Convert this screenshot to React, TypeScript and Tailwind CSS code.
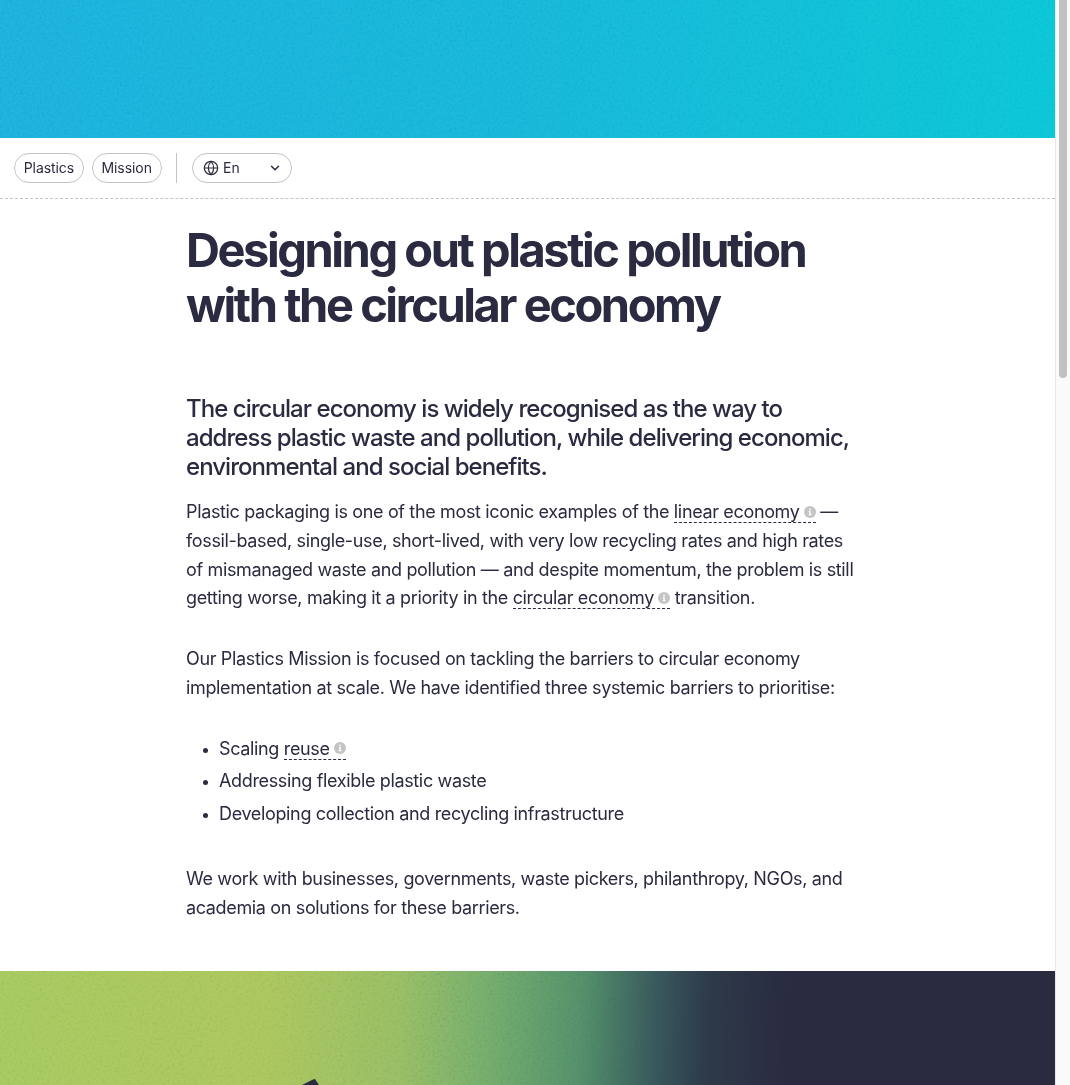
import { ChevronDown, Globe } from "lucide-react";

function Noise({ id, className }: { id: string; className: string }) {
  return (
    <svg className={className}>
      <filter id={id}>
        <feTurbulence type="fractalNoise" baseFrequency="0.4" numOctaves="3" stitchTiles="stitch" />
        <feColorMatrix type="matrix" values="2.5 0 0 0 -0.75 2.5 0 0 0 -0.75 2.5 0 0 0 -0.75 0 0 0 0 1" />
      </filter>
      <rect width="100%" height="100%" filter={`url(#${id})`} />
    </svg>
  );
}

function Pill({ children }: { children: React.ReactNode }) {
  return (
    <span className="flex h-[30px] items-center rounded-full border border-[#c4c4c4] px-[8.7px] text-[14px] tracking-[-0.005em] text-[#2a2a40]">
      {children}
    </span>
  );
}

function InfoDot() {
  return (
    <svg className="h-3 w-3" viewBox="0 0 12 12">
      <circle cx="6" cy="6" r="6" fill="#c4c4c4" />
      <rect x="5.2" y="2.6" width="1.6" height="1.5" fill="#fff" />
      <path d="M4.7 5h2.1v3.2h.7v1H4.6v-1h.8V6h-.7z" fill="#fff" />
    </svg>
  );
}

function Term({ children }: { children: React.ReactNode }) {
  return (
    <span className="inline-flex items-center gap-1 border-b border-dashed border-[#2a2a40] leading-[21px]">
      {children}
      <InfoDot />
    </span>
  );
}

export default function App() {
  return (
    <div className="flex h-[1085px] overflow-hidden bg-white font-['Inter',sans-serif] text-[#2a2a40]">
      <main className="min-w-0 flex-1">
        {/* Hero band */}
        <div className="relative h-[138px] overflow-hidden bg-gradient-to-r from-[#1cb1dd] via-[#17b7d8] to-[#0bc6d6]">
          <Noise id="hero-noise" className="absolute inset-0 h-full w-full opacity-10 mix-blend-soft-light" />
        </div>

        {/* Tags */}
        <div className="flex h-[61px] items-center border-b border-dashed border-[#c4c4c4] pb-[1px] pl-[14px]">
          <div className="flex gap-2">
            <Pill>Plastics</Pill>
            <Pill>Mission</Pill>
          </div>
          <div className="ml-[14px] mr-[15px] h-[30px] w-px bg-[#c4c4c4]" />
          <span className="flex h-[30px] w-[100px] items-center rounded-full border border-[#c4c4c4] pl-[10.5px] pr-[9px] text-[14px] tracking-[-0.005em]">
            <Globe className="mr-[4px] h-4 w-4" strokeWidth={1.75} />
            En
            <ChevronDown className="ml-auto h-[14px] w-[14px]" strokeWidth={2.5} />
          </span>
        </div>

        {/* Article */}
        <article className="ml-[186px] w-[670px]">
          <h1 className="mt-[22.5px] text-[47px] font-bold leading-[55px] tracking-[-0.052em]">
            Designing out plastic pollution
            <br />
            with the circular economy
          </h1>

          <p className="mt-[62.5px] text-[24px] font-[450] leading-[29px] tracking-[-0.04em]">
            The circular economy is widely recognised as the way to address plastic waste and pollution, while delivering economic, environmental and social benefits.
          </p>

          <p className="mt-[17px] text-[18px] leading-[28.8px] tracking-[-0.0195em]">
            Plastic packaging is one of the most iconic examples of the <Term>linear economy</Term> — fossil-based, single-use, short-lived, with very low recycling rates and high rates of mismanaged waste and pollution — and despite momentum, the problem is still getting worse, making it a priority in the <Term>circular economy</Term> transition.
          </p>

          <p className="mt-8 text-[18px] leading-[28.8px] tracking-[-0.0195em]">
            Our Plastics Mission is focused on tackling the barriers to circular economy implementation at scale. We have identified three systemic barriers to prioritise:
          </p>

          <ul className="mt-[30px] list-disc pl-[33px] text-[18px] leading-[32.5px] tracking-[-0.0195em] marker:text-[14px]">
            <li>
              Scaling <Term>reuse</Term>
            </li>
            <li>Addressing flexible plastic waste</li>
            <li>Developing collection and recycling infrastructure</li>
          </ul>

          <p className="mt-[35px] text-[18px] leading-[28.8px] tracking-[-0.0195em]">
            We work with businesses, governments, waste pickers, philanthropy, NGOs, and academia on solutions for these barriers.
          </p>
        </article>

        {/* Next section band */}
        <div className="relative mt-[48px] h-[120px] overflow-hidden bg-[linear-gradient(92deg,#a6c95f_0%,#abc65c_25%,#97bd64_38%,#74ad6c_46%,#53906a_55%,#38595c_62%,#2d3a4a_67%,#2a2a40_75%,#2a2a40_100%)]">
          <Noise id="band-noise" className="absolute inset-y-0 left-0 h-full w-[70%] opacity-10 mix-blend-soft-light [mask-image:linear-gradient(90deg,#000_60%,transparent_95%)]" />
          <svg className="absolute left-[296px] top-[106px]" width="30" height="14" viewBox="0 0 30 14">
            <path d="M6 8 17 2.5 19 2l4 6z" fill="#2a2a40" />
          </svg>
        </div>
      </main>

      {/* Scrollbar */}
      <div className="w-[15px] shrink-0 border-l border-[#e8e8e8] bg-[#fafafa] pl-[3px] pr-[3px]">
        <div className="h-[378px] w-[8px] rounded-b-sm bg-[#c1c1c1]" />
      </div>
    </div>
  );
}
